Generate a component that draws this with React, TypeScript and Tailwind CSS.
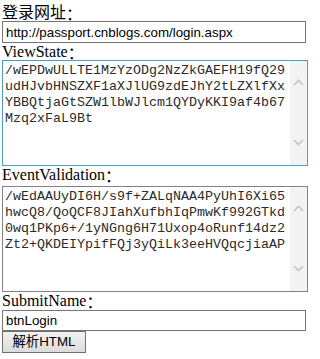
const viewState = [
  '/wEPDwULLTE1MzYzODg2NzZkGAEFH19fQ29',
  'udHJvbHNSZXF1aXJlUG9zdEJhY2tLZXlfXx',
  'YBBQtjaGtSZW1lbWJlcm1QYDyKKI9af4b67',
  'Mzq2xFaL9Bt',
].join('\n')

const eventValidation = [
  '/wEdAAUyDI6H/s9f+ZALqNAA4PyUhI6Xi65',
  'hwcQ8/QoQCF8JIahXufbhIqPmwKf992GTkd',
  '0wq1PKp6+/1yNGng6H71Uxop4oRunf14dz2',
  'Zt2+QKDEIYpifFQj3yQiLk3eeHVQqcjiaAP',
].join('\n')

function Chevron({ up }: { up?: boolean }) {
  return (
    <svg width="11" height="7" viewBox="0 0 11 7" className="block">
      <path
        d={up ? 'M1 6 L5.5 1.5 L10 6' : 'M1 1 L5.5 5.5 L10 1'}
        fill="none"
        stroke="#c3c3c3"
        strokeWidth="1.6"
      />
    </svg>
  )
}

function TextBox({ value, focused }: { value: string; focused?: boolean }) {
  return (
    <div
      className={`ml-[2px] flex h-[106px] w-[306px] border ${
        focused ? 'border-[#4a9fc8]' : 'border-[#828282]'
      }`}
    >
      <textarea
        readOnly
        value={value}
        className="flex-1 resize-none overflow-hidden whitespace-pre bg-white pl-[2px] pt-[2px] font-['Liberation_Mono',monospace] text-[13.33px] leading-[16px] text-[#2b2b2b] outline-none"
      />
      <div className="flex w-[17px] flex-col items-center justify-between bg-[#f3f3f3] pb-[19px] pt-[18px]">
        <Chevron up />
        <Chevron />
      </div>
    </div>
  )
}

function Label({ text, className }: { text: string; className: string }) {
  return (
    <div className={`pl-[2px] ${className}`}>
      {text}
      <span className="relative top-[2px]">：</span>
    </div>
  )
}

function Field({ value, h }: { value: string; h: string }) {
  return (
    <input
      readOnly
      value={value}
      className={`ml-[2px] block w-[304px] border border-[#767676] px-[3px] font-['Liberation_Sans',sans-serif] text-[13.33px] text-black outline-none ${h}`}
    />
  )
}

export default function App() {
  return (
    <div className="h-[359px] w-[320px] overflow-hidden bg-white font-['Liberation_Serif','Noto_Sans_CJK_SC',serif] text-[16px] text-black">
      <Label text="登录网址" className="h-[21px] pt-[1px] font-['Noto_Sans_CJK_SC',sans-serif] leading-[20px]" />
      <Field value="http://passport.cnblogs.com/login.aspx" h="h-[22px]" />
      <Label text="ViewState" className="h-[17px] leading-[18px]" />
      <TextBox value={viewState} focused />
      <Label text="EventValidation" className="h-[20px] leading-[17px]" />
      <TextBox value={eventValidation} />
      <Label text="SubmitName" className="h-[18px] leading-[18px]" />
      <Field value="btnLogin" h="h-[21px]" />
      <button className="ml-[2px] block h-[22px] w-[84px] border border-[#707070] bg-gradient-to-b from-[#f2f2f2] to-[#dcdcdc] font-['Liberation_Sans','Noto_Sans_CJK_SC',sans-serif] text-[13.33px] leading-[20px] text-black">
        解析HTML
      </button>
    </div>
  )
}
